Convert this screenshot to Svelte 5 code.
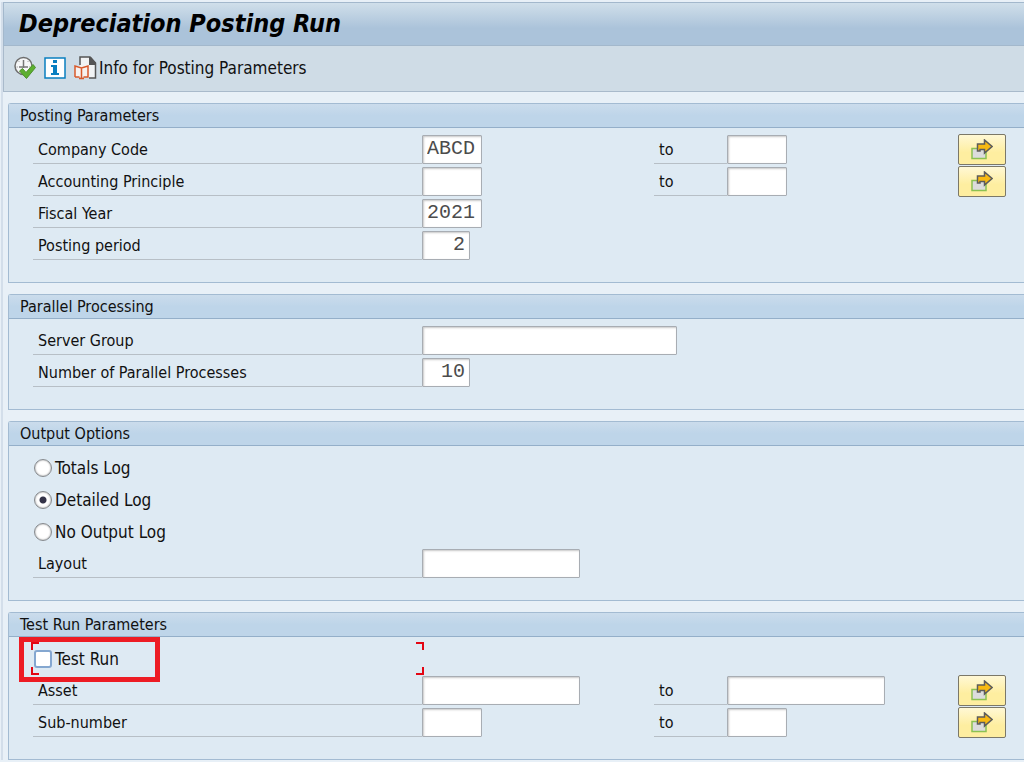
<script lang="ts">
	type Row = {
		kind: 'field' | 'radio' | 'check';
		id: string;
		label: string;
		value?: string;
		size?: string;
		range?: string;
		right?: boolean;
	};

	const groups: { title: string; rows: Row[] }[] = [
		{
			title: 'Posting Parameters',
			rows: [
				{ kind: 'field', id: 'company', label: 'Company Code', value: 'ABCD', size: 'code', range: 'code' },
				{ kind: 'field', id: 'principle', label: 'Accounting Principle', size: 'code', range: 'code' },
				{ kind: 'field', id: 'year', label: 'Fiscal Year', value: '2021', size: 'code' },
				{ kind: 'field', id: 'period', label: 'Posting period', value: '2', size: 'short', right: true }
			]
		},
		{
			title: 'Parallel Processing',
			rows: [
				{ kind: 'field', id: 'server', label: 'Server Group', size: 'wide' },
				{ kind: 'field', id: 'processes', label: 'Number of Parallel Processes', value: '10', size: 'short', right: true }
			]
		},
		{
			title: 'Output Options',
			rows: [
				{ kind: 'radio', id: 'totals', label: 'Totals Log' },
				{ kind: 'radio', id: 'detailed', label: 'Detailed Log' },
				{ kind: 'radio', id: 'none', label: 'No Output Log' },
				{ kind: 'field', id: 'layout', label: 'Layout', size: 'medium' }
			]
		},
		{
			title: 'Test Run Parameters',
			rows: [
				{ kind: 'check', id: 'test', label: 'Test Run' },
				{ kind: 'field', id: 'asset', label: 'Asset', size: 'medium', range: 'medium' },
				{ kind: 'field', id: 'subnumber', label: 'Sub-number', size: 'code', range: 'code' }
			]
		}
	];

	let log = $state('detailed');
	let testRun = $state(false);
</script>

<div class="screen">
	<header>
		<h1>Depreciation Posting Run</h1>
	</header>

	<div class="toolbar">
		<button class="tool" aria-label="Execute">
			<svg width="22" height="24" viewBox="0 0 22 24" fill="none">
				<circle cx="9.5" cy="10" r="8.5" fill="#f6f7f8" stroke="#6e6e6e" stroke-width="1.5" />
				<path d="M9.5 4v8M5 11h9" stroke="#777" stroke-width="1.5" />
				<path d="M2.500 11h1.500M15 11h1.500M9.500 15v2M4.500 5l1 1M14.500 5l-1 1" stroke="#aaa" />
				<path d="M5.500 15l3-2.500 3.500 4 7-8 2.500 3L12.500 22.500z" fill="#5cb030" stroke="#4c8f2c" />
			</svg>
		</button>
		<button class="tool" aria-label="Information">
			<svg width="22" height="22" viewBox="0 0 22 22">
				<path d="M1 1h20v20H1z" fill="#fff" stroke="#0a7fc0" stroke-width="1.500" />
				<path d="M9 3h4v3H9zM7 8h6v8h2v2H7v-2h2v-6H7z" fill="#0a7fc0" />
			</svg>
		</button>
		<button class="tool info">
			<svg width="23" height="24" viewBox="0 0 23 24" fill="none">
				<path d="M6 10V1h10l5.500 6v15H14V10z" fill="#f1f3f4" />
				<path d="M6 9V1h10l5.500 6v15H15" stroke="#555" stroke-width="1.500" />
				<path d="M15 1h2l5 6v2h-7z" fill="#555" />
				<path d="M1 10h13v11H1z" fill="#f6f2f0" />
				<path d="M1 21V10l6.500 2L14 10v11H9.500M1 21h4.500M7.500 12v10M5 22.500h5" stroke="#d9592b" stroke-width="1.500" />
			</svg>
			<span>Info for Posting Parameters</span>
		</button>
	</div>

	<main>
		{#each groups as group}
			<section>
				<h2>{group.title}</h2>
				<div class="rows">
					{#each group.rows as row}
						<div class="row">
							{#if row.kind === 'radio'}
								<label class="option">
									<input type="radio" name="log" value={row.id} bind:group={log} />
									{row.label}
								</label>
							{:else if row.kind === 'check'}
								<label class="option focused">
									<input type="checkbox" bind:checked={testRun} />
									{row.label}
								</label>
							{:else}
								<label class="name" for={row.id}>{row.label}</label>
								<input class="field {row.size}" class:right={row.right} id={row.id} type="text" value={row.value ?? ''} />
								{#if row.range}
									<label class="name" for="{row.id}-to">to</label>
									<input class="field {row.range}" id="{row.id}-to" type="text" />
									<button class="more" aria-label="Multiple selection for {row.label}">
										<svg width="22" height="21" viewBox="0 0 22 21">
											<path d="M1 9.500h14v10H1z" fill="#dcdcdc" stroke="#8cc152" stroke-width="1.500" />
											<path d="M6.500 12V5h7V1l7.500 6.500-7.500 6.500v-3.500H9V12z" fill="#f8b912" stroke="#5c5c5c" stroke-width="1.500" />
										</svg>
									</button>
								{/if}
							{/if}
						</div>
					{/each}
				</div>
			</section>
		{/each}
	</main>
</div>

<style>
	:global(body) {
		margin: 0;
		background: #e8f0f7;
	}

	.screen {
		margin: 2px 0 0 1px;
		border-left: 2px solid #d3deea;
		font-family: 'DejaVu Sans Condensed', Tahoma, sans-serif;
		font-size: 16px;
		line-height: 20px;
		color: #111;
		overflow: hidden;
	}

	header {
		box-sizing: border-box;
		height: 44px;
		padding: 0 15px;
		display: flex;
		align-items: center;
		border: 1px solid #a3b8cc;
		border-right: 0;
		background: linear-gradient(#d0dfea, #abc3da 60%, #abc3da);
	}

	h1 {
		margin: 0;
		font-size: 25px;
		line-height: 30px;
		font-style: italic;
		font-weight: bold;
		color: #000;
		white-space: nowrap;
	}

	.toolbar {
		box-sizing: border-box;
		height: 46px;
		padding: 0 10px 2px;
		display: flex;
		align-items: center;
		gap: 8px;
		border-left: 1px solid #a9bacb;
		border-bottom: 1px solid #a9bacb;
		background: #cfdce6;
	}

	button {
		font: inherit;
		color: inherit;
		padding: 0;
		cursor: pointer;
	}

	.tool {
		display: flex;
		align-items: center;
		border: 0;
		background: none;
		white-space: nowrap;
	}

	.info {
		gap: 2px;
		font-size: 17px;
	}

	main {
		display: flex;
		flex-direction: column;
		gap: 11px;
		padding: 11px 0 0 5px;
	}

	section {
		border: 1px solid #a3bbd2;
		border-right: 0;
		border-top-left-radius: 3px;
		background: #deeaf3;
	}

	h2 {
		margin: 0;
		padding: 2px 11px 1px;
		border-bottom: 1px solid #94afc9;
		background: linear-gradient(#cbdcec, #bed5e9 50%);
		font-size: 16px;
		line-height: 20px;
		font-weight: normal;
	}

	.rows {
		display: grid;
		gap: 3px;
		padding: 7px 0 22px 24px;
	}

	.row {
		display: grid;
		grid-template-columns: 389px 232px 73px 231px 48px;
		grid-template-rows: 29px;
		align-items: center;
	}

	.name {
		box-sizing: border-box;
		height: 29px;
		padding: 5px 5px 3px;
		border-bottom: 1px solid #b7bfc6;
		white-space: nowrap;
	}

	.field {
		box-sizing: border-box;
		height: 29px;
		padding: 0 4px 2px;
		border: 1px solid #a8adb3;
		border-radius: 1px;
		background: #fff;
		box-shadow: inset 1px 1px 2px #c8c8c8;
		font-family: 'Liberation Mono', 'Courier New', monospace;
		font-size: 20px;
		color: #4c4c4c;
	}

	.short {
		width: 48px;
	}

	.code {
		width: 60px;
	}

	.medium {
		width: 158px;
	}

	.wide {
		width: 255px;
	}

	.right {
		text-align: right;
	}

	.more {
		height: 31px;
		display: flex;
		align-items: center;
		justify-content: center;
		border: 1px solid #7b7868;
		border-radius: 2px;
		background: linear-gradient(#fff8d5, #feeea0 60%);
	}

	.option {
		position: relative;
		display: flex;
		align-items: center;
		gap: 3px;
		height: 29px;
		font-size: 17px;
		white-space: nowrap;
	}

	.option input {
		appearance: none;
		box-sizing: border-box;
		width: 18px;
		height: 18px;
		margin: 0 0 0 1px;
		border: 1px solid #85898d;
		background: #fff;
	}

	.option input[type='radio'] {
		border-radius: 50%;
		box-shadow: inset 0 0 2px #8a8a8a;
	}

	.option input[type='radio']:checked {
		background: radial-gradient(circle, #333348 3px, #fff 4px);
	}

	.option input[type='checkbox'] {
		border: 2px solid #84a7d0;
		border-radius: 3px;
	}

	.option input[type='checkbox']:checked {
		background: #333348;
	}

	/* red corner marks around the field that has the cursor */
	.focused::before {
		--red: linear-gradient(#e30613, #e30613);
		content: '';
		position: absolute;
		inset: -2px;
		background:
			var(--red) 0 0 / 8px 2px,
			var(--red) 0 0 / 2px 8px,
			var(--red) 100% 0 / 8px 2px,
			var(--red) 100% 0 / 2px 8px,
			var(--red) 0 100% / 8px 2px,
			var(--red) 0 100% / 2px 8px,
			var(--red) 100% 100% / 8px 2px,
			var(--red) 100% 100% / 2px 8px;
		background-repeat: no-repeat;
		pointer-events: none;
	}

	.focused::after {
		content: '';
		position: absolute;
		box-sizing: border-box;
		top: -7px;
		left: -14px;
		width: 141px;
		height: 45px;
		border: 5px solid #ed1c24;
		pointer-events: none;
	}
</style>
